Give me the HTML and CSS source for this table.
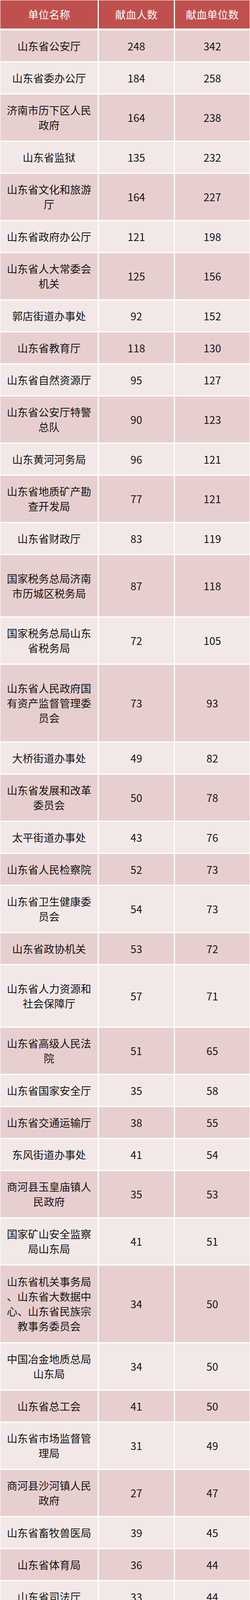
FILE: index.html
```html
<!DOCTYPE html>
<html lang="zh-CN">
<head>
<meta charset="utf-8">
<title>献血统计</title>
<link rel="stylesheet" href="styles.css">
</head>
<body>
<div class="table">
  <div class="row head"><div class="cell">单位名称</div><div class="cell">献血人数</div><div class="cell">献血单位数</div></div>
  <div class="row h2"><div class="cell name">山东省公安厅</div><div class="cell">248</div><div class="cell">342</div></div>
  <div class="row h2"><div class="cell name">山东省委办公厅</div><div class="cell">184</div><div class="cell">258</div></div>
  <div class="row h3"><div class="cell name">济南市历下区人民政府</div><div class="cell">164</div><div class="cell">238</div></div>
  <div class="row h2"><div class="cell name">山东省监狱</div><div class="cell">135</div><div class="cell">232</div></div>
  <div class="row h3"><div class="cell name">山东省文化和旅游厅</div><div class="cell">164</div><div class="cell">227</div></div>
  <div class="row h2"><div class="cell name">山东省政府办公厅</div><div class="cell">121</div><div class="cell">198</div></div>
  <div class="row h3"><div class="cell name">山东省人大常委会机关</div><div class="cell">125</div><div class="cell">156</div></div>
  <div class="row h2"><div class="cell name">郭店街道办事处</div><div class="cell">92</div><div class="cell">152</div></div>
  <div class="row h2"><div class="cell name">山东省教育厅</div><div class="cell">118</div><div class="cell">130</div></div>
  <div class="row h2"><div class="cell name">山东省自然资源厅</div><div class="cell">95</div><div class="cell">127</div></div>
  <div class="row h3"><div class="cell name">山东省公安厅特警总队</div><div class="cell">90</div><div class="cell">123</div></div>
  <div class="row h2"><div class="cell name">山东黄河河务局</div><div class="cell">96</div><div class="cell">121</div></div>
  <div class="row h3"><div class="cell name">山东省地质矿产勘查开发局</div><div class="cell">77</div><div class="cell">121</div></div>
  <div class="row h2"><div class="cell name">山东省财政厅</div><div class="cell">83</div><div class="cell">119</div></div>
  <div class="row h4"><div class="cell name">国家税务总局济南市历城区税务局</div><div class="cell">87</div><div class="cell">118</div></div>
  <div class="row h3"><div class="cell name">国家税务总局山东省税务局</div><div class="cell">72</div><div class="cell">105</div></div>
  <div class="row h5"><div class="cell name">山东省人民政府国有资产监督管理委员会</div><div class="cell">73</div><div class="cell">93</div></div>
  <div class="row h2"><div class="cell name">大桥街道办事处</div><div class="cell">49</div><div class="cell">82</div></div>
  <div class="row h3"><div class="cell name">山东省发展和改革委员会</div><div class="cell">50</div><div class="cell">78</div></div>
  <div class="row h2"><div class="cell name">太平街道办事处</div><div class="cell">43</div><div class="cell">76</div></div>
  <div class="row h2"><div class="cell name">山东省人民检察院</div><div class="cell">52</div><div class="cell">73</div></div>
  <div class="row h3"><div class="cell name">山东省卫生健康委员会</div><div class="cell">54</div><div class="cell">73</div></div>
  <div class="row h2"><div class="cell name">山东省政协机关</div><div class="cell">53</div><div class="cell">72</div></div>
  <div class="row h4"><div class="cell name">山东省人力资源和社会保障厅</div><div class="cell">57</div><div class="cell">71</div></div>
  <div class="row h3"><div class="cell name">山东省高级人民法院</div><div class="cell">51</div><div class="cell">65</div></div>
  <div class="row h2"><div class="cell name">山东省国家安全厅</div><div class="cell">35</div><div class="cell">58</div></div>
  <div class="row h2"><div class="cell name">山东省交通运输厅</div><div class="cell">38</div><div class="cell">55</div></div>
  <div class="row h2"><div class="cell name">东风街道办事处</div><div class="cell">41</div><div class="cell">54</div></div>
  <div class="row h3"><div class="cell name">商河县玉皇庙镇人民政府</div><div class="cell">35</div><div class="cell">53</div></div>
  <div class="row h3"><div class="cell name">国家矿山安全监察局山东局</div><div class="cell">41</div><div class="cell">51</div></div>
  <div class="row h5"><div class="cell name">山东省机关事务局<br>、山东省大数据中<br>心、山东省民族宗<br>教事务委员会</div><div class="cell">34</div><div class="cell">50</div></div>
  <div class="row h3"><div class="cell name">中国冶金地质总局山东局</div><div class="cell">34</div><div class="cell">50</div></div>
  <div class="row h2"><div class="cell name">山东省总工会</div><div class="cell">41</div><div class="cell">50</div></div>
  <div class="row h3"><div class="cell name">山东省市场监督管理局</div><div class="cell">31</div><div class="cell">49</div></div>
  <div class="row h3"><div class="cell name">商河县沙河镇人民政府</div><div class="cell">27</div><div class="cell">47</div></div>
  <div class="row h2"><div class="cell name">山东省畜牧兽医局</div><div class="cell">39</div><div class="cell">45</div></div>
  <div class="row h2"><div class="cell name">山东省体育局</div><div class="cell">36</div><div class="cell">44</div></div>
  <div class="row h2"><div class="cell name">山东省司法厅</div><div class="cell">33</div><div class="cell">44</div></div>
  <div class="row h2"><div class="cell name">山东省气象局</div><div class="cell">43</div><div class="cell">43</div></div>
  <div class="row h2"><div class="cell name">山东省科学技术厅</div><div class="cell">38</div><div class="cell">42</div></div>
  <div class="row h2"><div class="cell name">山东省应急管理厅</div><div class="cell">26</div><div class="cell">39</div></div>
  <div class="row h3"><div class="cell name">济南市自然资源和规划局</div><div class="cell">25</div><div class="cell">38</div></div>
  <div class="row h2"><div class="cell name">智远街道办事处</div><div class="cell">21</div><div class="cell">38</div></div>
  <div class="row h3"><div class="cell name">山东省工业和信息化厅</div><div class="cell">26</div><div class="cell">33</div></div>
  <div class="row h2"><div class="cell name">山东省水利厅</div><div class="cell">24</div><div class="cell">33</div></div>
  <div class="row h2"><div class="cell name">山东省生态环境厅</div><div class="cell">25</div><div class="cell">32</div></div>
  <div class="row h3"><div class="cell name">商河县殷巷镇人民政府</div><div class="cell">16</div><div class="cell">30</div></div>
  <div class="row h2"><div class="cell name">山东省审计厅</div><div class="cell">26</div><div class="cell">29</div></div>
  <div class="row h2"><div class="cell name">山东省委网信办</div><div class="cell">18</div><div class="cell">28</div></div>
  <div class="row h2"><div class="cell name">山东省监狱管理局</div><div class="cell">20</div><div class="cell">28</div></div>
  <div class="row h4"><div class="cell name">中共山东省委外事委员会办公室</div><div class="cell">19</div><div class="cell">26</div></div>
  <div class="row h3"><div class="cell name">商河县韩庙镇人民政府</div><div class="cell">16</div><div class="cell">25</div></div>
  <div class="row h3"><div class="cell name">山东省人民防空办公室</div><div class="cell">17</div><div class="cell">25</div></div>
  <div class="row h3"><div class="cell name">山东省残疾人联合会</div><div class="cell">17</div><div class="cell">21</div></div>
  <div class="row h2"><div class="cell name">山东省水文局</div><div class="cell">16</div><div class="cell">18</div></div>
  <div class="row h4"><div class="cell name">山东省机构编制委员会办公室</div><div class="cell">15</div><div class="cell">18</div></div>
  <div class="row h4"><div class="cell name">中国国际贸易促进会山东省委员会</div><div class="cell">11</div><div class="cell">17</div></div>
  <div class="row h3"><div class="cell name">国家统计局山东调查总队</div><div class="cell">13</div><div class="cell">17</div></div>
  <div class="row h3"><div class="cell name">山东省委军民融合办公室</div><div class="cell">12</div><div class="cell">16</div></div>
  <div class="row h3"><div class="cell name">中共山东省委老干部局</div><div class="cell">10</div><div class="cell">12</div></div>
  <div class="row h3"><div class="cell name">国家能源局山东监管办公室</div><div class="cell">7</div><div class="cell">11</div></div>
  <div class="row h2"><div class="cell name">山东省民政厅</div><div class="cell">10</div><div class="cell">11</div></div>
</div>
</body>
</html>
```
FILE: styles.css
```css
html, body {
  margin: 0;
  padding: 0;
  background: #ffffff;
}

.table {
  width: 640px;
  box-sizing: border-box;
  padding: 1px 1px 0 1px;
  display: flex;
  flex-direction: column;
  gap: 3px;
  font-family: "Noto Sans CJK SC", "Noto Sans", sans-serif;
  font-size: 27px;
  line-height: 38px;
  color: #141414;
}

.row {
  display: grid;
  grid-template-columns: 249px 192px 191px;
  column-gap: 3px;
}

.cell {
  display: flex;
  align-items: center;
  justify-content: center;
  text-align: center;
  box-sizing: border-box;
}

.name {
  padding: 0 12px;
}

.head {
  height: 72px;
  margin-bottom: 2px;
}

.head .cell {
  background: #c0504d;
  color: #ffffff;
}

.row:nth-child(even) .cell {
  background: #e8cfcf;
}

.row:nth-child(odd):not(.head) .cell {
  background: #f3e8e8;
}

.h2 { height: 79px; }
.h3 { height: 118px; }
.h4 { height: 157px; }
.h5 { height: 196px; }
```
